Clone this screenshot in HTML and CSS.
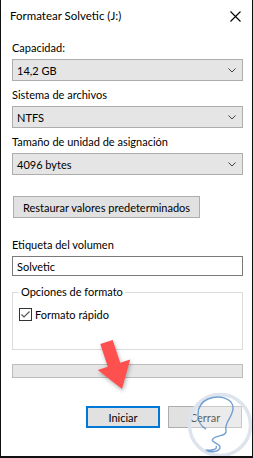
FILE: index.html
```html
<!DOCTYPE html>
<html lang="es">
<head>
    <meta charset="UTF-8">
    <title>Formatear Solvetic (J:)</title>
    <link rel="stylesheet" href="styles.css">
</head>
<body>
    <div class="window">
        <div class="titlebar">
            <span class="title">Formatear Solvetic (J:)</span>
            <svg class="close" width="11" height="11" viewBox="0 0 11 11">
                <path d="M0.5 0.5 L10.5 10.5 M10.5 0.5 L0.5 10.5" stroke="#000" stroke-width="1.1" fill="none"/>
            </svg>
        </div>

        <div class="content">
            <div class="label first">Capacidad:</div>
            <div class="combo">
                <span>14,2 GB</span>
                <svg class="chevron" width="8" height="5" viewBox="0 0 8 5"><path d="M0.5 0.5 L4 4 L7.5 0.5" stroke="#404040" fill="none"/></svg>
            </div>

            <div class="label">Sistema de archivos</div>
            <div class="combo">
                <span>NTFS</span>
                <svg class="chevron" width="8" height="5" viewBox="0 0 8 5"><path d="M0.5 0.5 L4 4 L7.5 0.5" stroke="#404040" fill="none"/></svg>
            </div>

            <div class="label">Tamaño de unidad de asignación</div>
            <div class="combo">
                <span>4096 bytes</span>
                <svg class="chevron" width="8" height="5" viewBox="0 0 8 5"><path d="M0.5 0.5 L4 4 L7.5 0.5" stroke="#404040" fill="none"/></svg>
            </div>

            <div class="btn restore">Restaurar valores predeterminados</div>

            <div class="label volume">Etiqueta del volumen</div>
            <div class="textbox">Solvetic</div>

            <fieldset class="group">
                <legend>Opciones de formato</legend>
                <div class="check-row">
                    <svg class="checkbox" width="13" height="13" viewBox="0 0 13 13">
                        <rect x="0.5" y="0.5" width="12" height="12" fill="#fff" stroke="#333"/>
                        <path d="M2.5 6.5 L5 9 L10.5 3.5" stroke="#555" stroke-width="1.2" fill="none"/>
                    </svg>
                    <span>Formato rápido</span>
                </div>
            </fieldset>

            <div class="progress"></div>

            <div class="actions">
                <div class="btn primary">Iniciar</div>
                <div class="btn">Cerrar</div>
            </div>
        </div>

        <svg class="arrow" width="50" height="62" viewBox="0 0 50 62">
            <polygon points="10.3,10 22.7,6 30.2,28.8 40.2,25.5 32,55 7.8,36.1 17.8,32.8" fill="#ff5050"/>
        </svg>

        <svg class="logo" width="70" height="70" viewBox="0 0 70 70">
            <circle cx="34" cy="34" r="30.5" fill="rgba(255,255,255,0.35)" stroke="#dde4ec" stroke-width="3.5"/>
            <path d="M20 38 C 10 33, 8 14, 22 8 C 34 3, 48 8, 47 18 C 46 27, 38 32, 40 39 C 41 45, 33 44, 28 47 C 22 51, 34 52, 34 56 C 34 61, 24 62, 20 59 C 26 60, 32 58, 30 55"
                  stroke="#5a8fcb" stroke-width="1.4" fill="none" opacity="0.85"/>
        </svg>
    </div>
</body>
</html>
```

FILE: styles.css
```css
body {
    margin: 0;
    padding: 0;
    background: #fff;
    font-family: 'Lato', 'Noto Sans', sans-serif;
    font-size: 11px;
    color: #000;
}
.window {
    position: relative;
    box-sizing: border-box;
    width: 253px;
    height: 458px;
    border-left: 1px solid #111;
    border-right: 1px solid #111;
    border-bottom: 2px solid #111;
    background: #fff;
    overflow: hidden;
    white-space: nowrap;
}
.titlebar {
    height: 32px;
    display: flex;
    align-items: center;
    justify-content: space-between;
    padding: 0 11px 0 9px;
}
.title {
    line-height: 16px;
    font-size: 11.5px;
}
.close {
    display: block;
}
.content {
    padding: 0 9px 0 11px;
}
.label {
    line-height: 16px;
    margin-top: 6px;
}
.label.first {
    margin-top: 8px;
}
.label.volume {
    margin-top: 19px;
}
.combo {
    box-sizing: border-box;
    height: 22px;
    margin-top: 3px;
    background: #e5e5e5;
    border: 1px solid #adadad;
    display: flex;
    align-items: center;
    justify-content: space-between;
    padding: 0 6px 0 4px;
}
.chevron {
    display: block;
}
.btn {
    box-sizing: border-box;
    height: 22px;
    background: #e1e1e1;
    border: 1px solid #adadad;
    display: flex;
    align-items: center;
    justify-content: center;
}
.restore {
    width: 187px;
    margin-top: 21px;
    margin-left: 1px;
}
.textbox {
    box-sizing: border-box;
    height: 20px;
    margin-top: 3px;
    border: 1px solid #7a7a7a;
    display: flex;
    align-items: center;
    padding: 0 4px;
}
.group {
    box-sizing: border-box;
    height: 66px;
    margin: 8px 0 0;
    padding: 8px 6px 0 6px;
    border: 1px solid #dcdcdc;
}
.group legend {
    padding: 0 2px;
    margin-left: 0;
    line-height: 16px;
}
.check-row {
    display: flex;
    align-items: center;
    gap: 3px;
}
.checkbox {
    display: block;
}
.progress {
    box-sizing: border-box;
    height: 14px;
    margin-top: 14px;
    background: #e6e6e6;
    border: 1px solid #bcbcbc;
}
.actions {
    display: flex;
    justify-content: flex-end;
    gap: 8px;
    margin-top: 28px;
    margin-right: 1px;
}
.actions .btn {
    width: 74px;
}
.btn.primary {
    border: 2px solid #0078d7;
}
.arrow {
    position: absolute;
    left: 89px;
    top: 334px;
    filter: drop-shadow(1px 2px 2px rgba(0, 0, 0, 0.3));
}
.logo {
    position: absolute;
    left: 185px;
    top: 391px;
}
```
